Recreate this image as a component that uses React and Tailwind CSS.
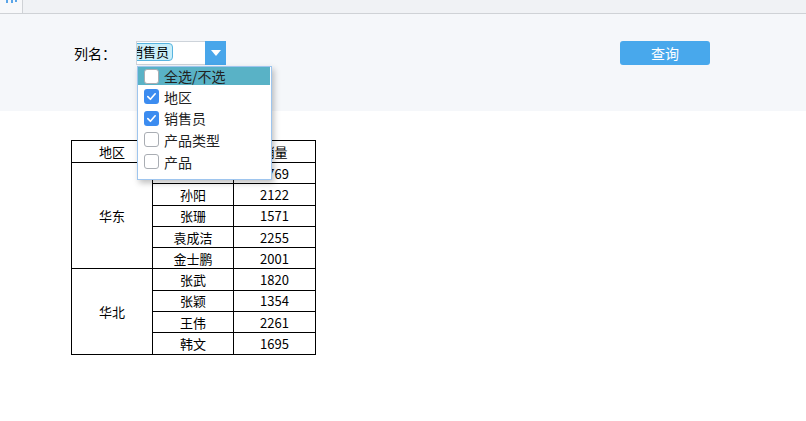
import React from 'react';

const options = [
  { label: '全选/不选', checked: false, active: true },
  { label: '地区', checked: true },
  { label: '销售员', checked: true },
  { label: '产品类型', checked: false },
  { label: '产品', checked: false },
];

const groups = [
  { region: '华东', rows: [['', '1769'], ['孙阳', '2122'], ['张珊', '1571'], ['袁成洁', '2255'], ['金士鹏', '2001']] },
  { region: '华北', rows: [['张武', '1820'], ['张颖', '1354'], ['王伟', '2261'], ['韩文', '1695']] },
];

function Check({ checked }) {
  if (checked) {
    return (
      <span className="w-[15px] h-[15px] rounded-[3px] bg-[#3c8cf0] flex items-center justify-center">
        <svg width="11" height="11" viewBox="0 0 12 12">
          <path d="M2 6.2 L4.8 9 L10 3" fill="none" stroke="#fff" strokeWidth="1.8" strokeLinecap="round" strokeLinejoin="round" />
        </svg>
      </span>
    );
  }
  return <span className="block w-[15px] h-[15px] rounded-[3px] bg-white border border-[#a9adb3]" />;
}

export default function App() {
  return (
    <div className="w-[806px] h-[421px] bg-white overflow-hidden text-black" style={{ fontFamily: '"Noto Sans CJK SC", "Noto Sans", sans-serif' }}>
      {/* top tab strip */}
      <div className="h-[14px] bg-[#f0f2f5] border-b border-[#cfd2d6] flex">
        <div className="w-[23px] h-[13px] bg-[#f7f8fa] border-r border-[#cfd2d6] overflow-hidden flex items-start justify-end pr-[4px]">
          <svg width="12" height="3" viewBox="0 0 12 3">
            <rect x="0" y="0" width="2" height="3" fill="#5aa5e8" />
            <rect x="5" y="0" width="2" height="3" fill="#5aa5e8" />
            <rect x="9" y="0" width="2" height="2" fill="#5aa5e8" />
          </svg>
        </div>
      </div>

      {/* parameter panel */}
      <div className="h-[97px] bg-[#f5f7fa] pt-[27px]">
        <div className="flex items-center h-[24px]">
          <span className="ml-[74px] w-[62px] text-[14px]">列名：</span>
          <div className="relative flex h-[24px]">
            <div className="w-[69px] h-[24px] bg-white border border-[#cdd3da] border-r-0 overflow-hidden relative">
              <span className="absolute left-[-11px] top-[1px] h-[18px] px-[3px] bg-[#c9eef9] border border-[#58b4df] rounded-[4px] text-[13px] leading-[16px] whitespace-nowrap">销售员</span>
            </div>
            <div className="w-[21px] h-[24px] bg-[#48a6ea] flex items-center justify-center">
              <svg width="10" height="6" viewBox="0 0 10 6"><path d="M0 0 H10 L5 6 Z" fill="#fff" /></svg>
            </div>

            {/* dropdown popup */}
            <div className="absolute left-[1px] top-[25px] w-[135px] h-[114px] bg-white border border-[#9ec5ee] shadow-[2px_3px_6px_rgba(0,0,0,0.25)] z-10">
              {options.map((o) =>
                o.active ? (
                  <div key={o.label} className="flex items-center h-[18px] bg-[#59b2c6] mr-[1px] mb-[1px]">
                    <span className="ml-[6px] mr-[5px]"><Check checked={o.checked} /></span>
                    <span className="text-[14px] leading-none text-[#222]">{o.label}</span>
                  </div>
                ) : (
                  <div key={o.label} className="flex items-center h-[21.6px]">
                    <span className="ml-[6px] mr-[5px]"><Check checked={o.checked} /></span>
                    <span className="text-[14px] leading-none text-[#222]">{o.label}</span>
                  </div>
                )
              )}
            </div>
          </div>
          <button className="ml-[394px] w-[90px] h-[24px] rounded-[3px] bg-[#48a8ec] text-white text-[14px] leading-none">查询</button>
        </div>
      </div>

      {/* report table */}
      <table className="mt-[29px] ml-[71px] border-collapse text-[13px]">
        <thead>
          <tr className="h-[22px]">
            <th className="w-[81px] border border-black font-normal leading-none">地区</th>
            <th className="w-[81px] border border-black font-normal leading-none">销售员</th>
            <th className="w-[82px] border border-black font-normal leading-none">销量</th>
          </tr>
        </thead>
        <tbody>
          {groups.map((g) =>
            g.rows.map((r, i) => (
              <tr key={r[1]} className="h-[21.3px]">
                {i === 0 && (
                  <td rowSpan={g.rows.length} className="border border-black text-center">{g.region}</td>
                )}
                <td className="border border-black text-center leading-none">{r[0]}</td>
                <td className="border border-black text-center leading-none">{r[1]}</td>
              </tr>
            ))
          )}
        </tbody>
      </table>
    </div>
  );
}
